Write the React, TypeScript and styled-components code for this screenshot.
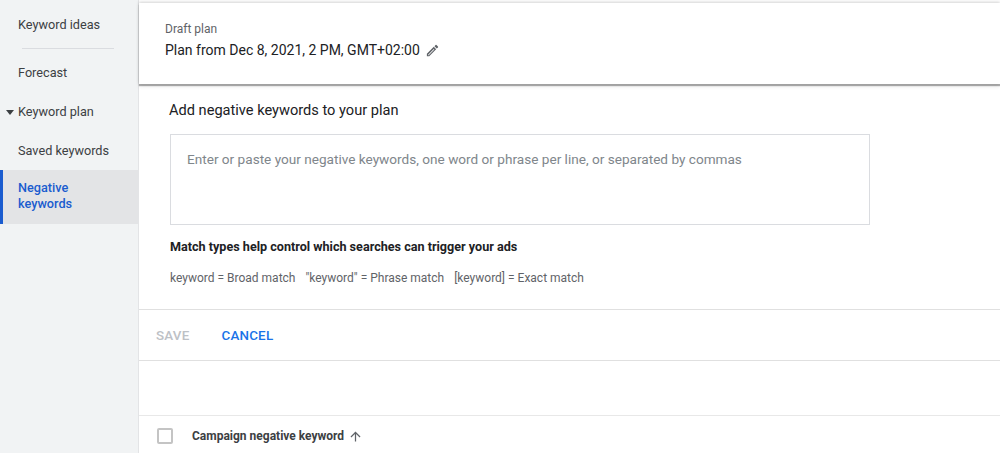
import React from 'react';
import styled, { createGlobalStyle } from 'styled-components';

const GlobalStyle = createGlobalStyle`
  html, body {
    margin: 0;
    padding: 0;
    background: #fff;
  }
  body {
    font-family: Roboto, 'Liberation Sans', Arial, sans-serif;
    color: #202124;
    -webkit-font-smoothing: antialiased;
  }
`;

const Page = styled.div`
  display: flex;
  width: 1000px;
  height: 453px;
  overflow: hidden;
`;

const Sidebar = styled.nav`
  width: 139px;
  flex-shrink: 0;
  background: #f1f3f4;
  border-right: 1px solid #e3e4e6;
  padding-top: 5px;
  box-sizing: border-box;
`;

const NavItem = styled.div<{ $active?: boolean }>`
  position: relative;
  display: flex;
  align-items: center;
  min-height: 39px;
  padding: ${(p) => (p.$active ? '10px 18px 12px' : '0 18px')};
  box-sizing: border-box;
  font-size: 12.7px;
  line-height: 16px;
  color: ${(p) => (p.$active ? '#1a5ccf' : '#3c4043')};
  font-weight: ${(p) => (p.$active ? 500 : 400)};
  background: ${(p) => (p.$active ? '#e3e4e6' : 'transparent')};
  border-left: ${(p) => (p.$active ? '3px solid #1a5ccf' : 'none')};
  padding-left: ${(p) => (p.$active ? '15px' : '18px')};
`;

const Caret = styled.span`
  position: absolute;
  left: 6px;
  top: 50%;
  margin-top: -2px;
  width: 0;
  height: 0;
  border-left: 4px solid transparent;
  border-right: 4px solid transparent;
  border-top: 5px solid #3c4043;
`;

const NavDivider = styled.div`
  height: 1px;
  background: #dadce0;
  margin: 4px 24px 4px 22px;
`;

const Main = styled.main`
  flex: 1;
  display: flex;
  flex-direction: column;
  background: #fff;
`;

const PlanHeader = styled.header`
  margin-top: 3px;
  height: 81px;
  flex-shrink: 0;
  padding: 18px 26px 0;
  box-sizing: border-box;
  background: #fff;
  box-shadow: 0 -1px 3px rgba(0, 0, 0, 0.18), 0 2px 1px rgba(0, 0, 0, 0.3),
    0 3px 4px rgba(0, 0, 0, 0.08);
  position: relative;
  z-index: 1;
`;

const Eyebrow = styled.div`
  font-size: 12px;
  line-height: 16px;
  color: #5f6368;
`;

const PlanName = styled.div`
  display: flex;
  align-items: center;
  gap: 5px;
  margin-top: 3px;
  font-size: 14px;
  line-height: 20px;
  color: #202124;
`;

const EditorSection = styled.section`
  padding: 16px 30px 0 31px;
`;

const Title = styled.h2`
  margin: 0 0 0 -1px;
  font-size: 14.6px;
  line-height: 20px;
  font-weight: 400;
  color: #202124;
`;

const KeywordInput = styled.textarea`
  display: block;
  width: 700px;
  height: 91px;
  margin-top: 14px;
  padding: 14px 16px;
  box-sizing: border-box;
  border: 1px solid #dadce0;
  border-radius: 0;
  resize: none;
  outline: none;
  font-family: inherit;
  font-size: 13.6px;
  line-height: 20px;
  color: #202124;

  &::placeholder {
    color: #80868b;
  }
`;

const HelpTitle = styled.div`
  margin-top: 14px;
  font-size: 12.6px;
  line-height: 16px;
  font-weight: 700;
  color: #202124;
`;

const Legend = styled.div`
  display: flex;
  gap: 10px;
  margin-top: 15px;
  margin-bottom: 23px;
  font-size: 12px;
  line-height: 16px;
  color: #5f6368;
`;

const Actions = styled.div`
  display: flex;
  align-items: center;
  height: 50px;
  flex-shrink: 0;
  padding-left: 1px;
  border-top: 1px solid #e0e0e0;
  border-bottom: 1px solid #e0e0e0;
`;

const TextButton = styled.button<{ $disabled?: boolean }>`
  border: none;
  background: none;
  padding: 0 16px;
  height: 36px;
  font-family: inherit;
  font-size: 13.4px;
  font-weight: 500;
  letter-spacing: 0.2px;
  cursor: pointer;
  color: ${(p) => (p.$disabled ? '#bdc1c6' : '#1a73e8')};
`;

const Spacer = styled.div`
  height: 54px;
  flex-shrink: 0;
  border-bottom: 1px solid #e8e8e8;
`;

const TableHead = styled.div`
  display: flex;
  align-items: center;
  height: 40px;
  flex-shrink: 0;
  padding-left: 18px;
`;

const Checkbox = styled.span`
  width: 16px;
  height: 16px;
  box-sizing: border-box;
  border: 2px solid #c4c4c4;
  border-radius: 2px;
  margin-right: 19px;
`;

const ColumnLabel = styled.span`
  display: flex;
  align-items: center;
  gap: 4px;
  font-size: 12px;
  font-weight: 700;
  color: #3c4043;
`;

function PencilIcon() {
  return (
    <svg width="15" height="15" viewBox="0 0 24 24" fill="#5f6368">
      <path d="M3 17.25V21h3.75L17.81 9.94l-3.75-3.75L3 17.25zm2.92 2.33H5v-.92l9.06-9.06.92.92-9.06 9.06zM20.71 7.04a1 1 0 0 0 0-1.41l-2.34-2.34a1 1 0 0 0-1.41 0l-1.83 1.83 3.75 3.75 1.83-1.83z" />
    </svg>
  );
}

function ArrowUpIcon() {
  return (
    <svg width="15" height="15" viewBox="0 0 24 24" fill="#5f6368">
      <path d="M4 12l1.41 1.41L11 7.83V20h2V7.83l5.58 5.59L20 12l-8-8-8 8z" />
    </svg>
  );
}

export default function App() {
  return (
    <>
      <GlobalStyle />
      <Page>
        <Sidebar>
          <NavItem>Keyword ideas</NavItem>
          <NavDivider />
          <NavItem>Forecast</NavItem>
          <NavItem>
            <Caret />
            Keyword plan
          </NavItem>
          <NavItem>Saved keywords</NavItem>
          <NavItem $active>
            Negative
            <br />
            keywords
          </NavItem>
        </Sidebar>
        <Main>
          <PlanHeader>
            <Eyebrow>Draft plan</Eyebrow>
            <PlanName>
              Plan from Dec 8, 2021, 2 PM, GMT+02:00
              <PencilIcon />
            </PlanName>
          </PlanHeader>
          <EditorSection>
            <Title>Add negative keywords to your plan</Title>
            <KeywordInput placeholder="Enter or paste your negative keywords, one word or phrase per line, or separated by commas" />
            <HelpTitle>Match types help control which searches can trigger your ads</HelpTitle>
            <Legend>
              <span>keyword = Broad match</span>
              <span>"keyword" = Phrase match</span>
              <span>[keyword] = Exact match</span>
            </Legend>
          </EditorSection>
          <Actions>
            <TextButton $disabled>SAVE</TextButton>
            <TextButton>CANCEL</TextButton>
          </Actions>
          <Spacer />
          <TableHead>
            <Checkbox />
            <ColumnLabel>
              Campaign negative keyword
              <ArrowUpIcon />
            </ColumnLabel>
          </TableHead>
        </Main>
      </Page>
    </>
  );
}
